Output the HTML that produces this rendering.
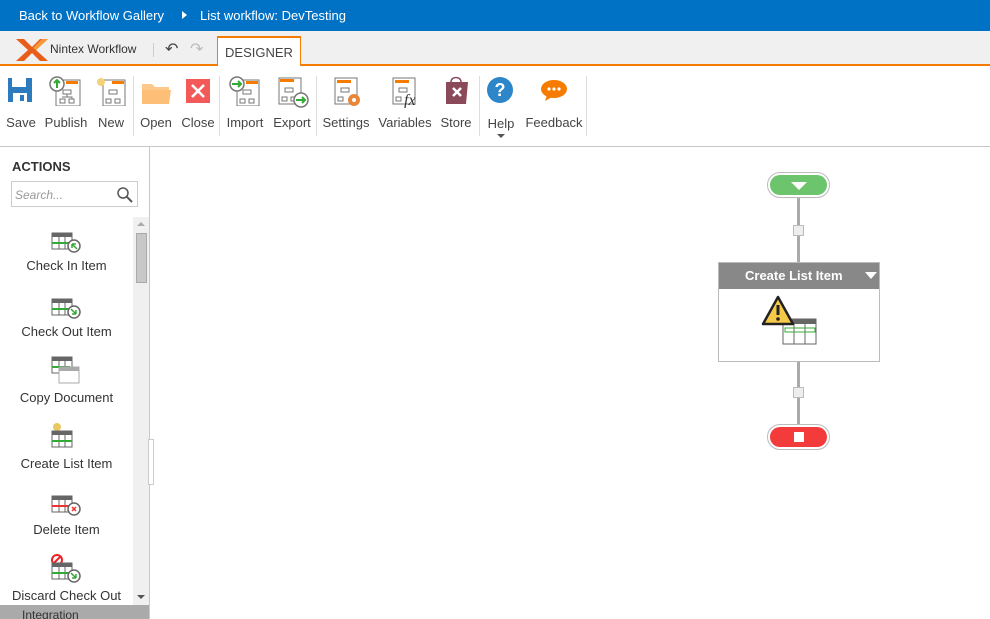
<!DOCTYPE html>
<html><head><meta charset="utf-8"><style>
*{margin:0;padding:0;box-sizing:border-box}
body{width:990px;height:619px;overflow:hidden;background:#fff;font-family:"Liberation Sans",sans-serif;position:relative;color:#333}
.abs{position:absolute}
#top{left:0;top:0;width:990px;height:31px;background:#0072c6;color:#fff;font-size:13px}
#tabs{left:0;top:31px;width:990px;height:35px;background:#f0f0f0;border-bottom:2px solid #f57c00}
#tb{left:0;top:66px;width:990px;height:81px;border-bottom:1px solid #c8c8c8}
.btn{position:absolute;top:0;font-size:13px;color:#444;text-align:center}
.btn span{position:absolute;top:49px;left:50%;transform:translateX(-50%);white-space:nowrap}
.sep{position:absolute;top:10px;width:1px;height:60px;background:#ddd}
.act{position:absolute;left:0;width:133px;text-align:center;font-size:13px;color:#333}
</style></head><body>
<div id="top" class="abs">
 <div class="abs" style="left:19px;top:8px">Back to Workflow Gallery</div>
 <div class="abs" style="left:182px;top:11px;width:0;height:0;border-left:5px solid #fff;border-top:4px solid transparent;border-bottom:4px solid transparent"></div>
 <div class="abs" style="left:200px;top:8px">List workflow: DevTesting</div>
</div>
<div id="tabs" class="abs">
 <svg class="abs" style="left:14px;top:6px" width="36" height="26"><path d="M2 2 L14 13 L2 24 L10 24 L18 16 L26 24 L34 24 L22 13 L34 2 L26 2 L18 10 L10 2Z" fill="#e85d1a"/><path d="M22 13 L34 2 L28 2 L19 11Z" fill="#f59a3a"/></svg>
 <div class="abs" style="left:50px;top:11px;font-size:12px;color:#333">Nintex Workflow</div>
 <div class="abs" style="left:153px;top:12px;width:1px;height:14px;background:#ccc"></div>
 <div class="abs" style="left:165px;top:8px;font-size:16px;color:#444">↶</div>
 <div class="abs" style="left:190px;top:8px;font-size:16px;color:#bbb">↷</div>
 <div class="abs" style="left:217px;top:5px;width:84px;height:30px;background:#fff;border:1px solid #f57c00;border-top:2px solid #f57c00;border-bottom:none;font-size:13px;color:#444;text-align:center;line-height:30px">DESIGNER</div>
</div>
<div id="tb" class="abs">
 <div class="btn" style="left:3px;width:36px"><svg class="abs" style="left:5px;top:12px" width="26" height="26"><rect width="24" height="24" fill="#2c7bbf"/><rect x="4" y="0" width="14" height="9" fill="#fff"/><rect x="5" y="15" width="14" height="9" fill="#fff"/><rect x="12" y="17" width="4" height="6" fill="#2c7bbf"/></svg><span>Save</span></div>
 <div class="btn" style="left:44px;width:44px"><svg class="abs" style="left:5px;top:10px" width="34" height="30"><rect x="7" y="4" width="24" height="26" fill="#fff" stroke="#777"/><rect x="17" y="5" width="12" height="3" fill="#f57c00"/><path d="M14 14h8v4h-8zM11 23h5v4h-5zM20 23h5v4h-5zM18 18v3M13 21h10v2" fill="none" stroke="#777"/><circle cx="8" cy="8" r="7" fill="#fff" stroke="#777" stroke-width="1.5"/><path d="M8 12V4M5 7l3-3 3 3" stroke="#3a3" stroke-width="2" fill="none"/></svg><span>Publish</span></div>
 <div class="btn" style="left:93px;width:36px"><svg class="abs" style="left:2px;top:10px" width="34" height="30"><rect x="8" y="4" width="22" height="26" fill="#fff" stroke="#777"/><rect x="17" y="5" width="12" height="3" fill="#f57c00"/><path d="M14 14h8v4h-8zM11 23h5v4h-5zM20 23h5v4h-5z" fill="none" stroke="#777"/><circle cx="6" cy="6" r="4" fill="#f3d27a"/></svg><span>New</span></div>
 <div class="sep" style="left:133px"></div>
 <div class="btn" style="left:138px;width:36px"><svg class="abs" style="left:3px;top:14px" width="32" height="26"><path d="M1 4h10l3 3h14v17H1z" fill="#fcc98a"/><path d="M1 10h29l-2 14H1z" fill="#fdbf78"/></svg><span>Open</span></div>
 <div class="btn" style="left:180px;width:36px"><svg class="abs" style="left:6px;top:13px" width="25" height="25"><rect width="24" height="24" fill="#f25a5a"/><path d="M6 6l12 12M18 6L6 18" stroke="#fff" stroke-width="2.5"/></svg><span>Close</span></div>
 <div class="sep" style="left:219px"></div>
 <div class="btn" style="left:224px;width:42px"><svg class="abs" style="left:5px;top:10px" width="34" height="30"><rect x="8" y="4" width="22" height="26" fill="#fff" stroke="#777"/><rect x="17" y="5" width="12" height="3" fill="#f57c00"/><path d="M14 14h8v4h-8zM11 23h5v4h-5zM20 23h5v4h-5z" fill="none" stroke="#777"/><circle cx="8" cy="8" r="7" fill="#fff" stroke="#777" stroke-width="1.5"/><path d="M3 8h9M9 5l3 3-3 3" stroke="#3a3" stroke-width="2" fill="none"/></svg><span>Import</span></div>
 <div class="btn" style="left:271px;width:42px"><svg class="abs" style="left:5px;top:10px" width="34" height="32"><rect x="3" y="2" width="22" height="26" fill="#fff" stroke="#777"/><rect x="4" y="3" width="14" height="3" fill="#f57c00"/><path d="M9 12h8v4H9zM6 21h5v4H6zM15 21h5v4h-5z" fill="none" stroke="#777"/><circle cx="25" cy="24" r="7" fill="#fff" stroke="#777" stroke-width="1.5"/><path d="M20 24h9M26 21l3 3-3 3" stroke="#3a3" stroke-width="2" fill="none"/></svg><span>Export</span></div>
 <div class="sep" style="left:316px"></div>
 <div class="btn" style="left:321px;width:50px"><svg class="abs" style="left:12px;top:10px" width="32" height="32"><rect x="2" y="2" width="22" height="26" fill="#fff" stroke="#777"/><rect x="4" y="4" width="14" height="3" fill="#f57c00"/><path d="M8 12h8v4H8zM5 21h5v4H5z" fill="none" stroke="#777"/><circle cx="21" cy="24" r="6" fill="#e8873a"/><circle cx="21" cy="24" r="2" fill="#fff"/></svg><span>Settings</span></div>
 <div class="btn" style="left:377px;width:56px"><svg class="abs" style="left:14px;top:10px" width="32" height="32"><rect x="2" y="2" width="22" height="26" fill="#fff" stroke="#777"/><rect x="4" y="4" width="14" height="3" fill="#f57c00"/><path d="M8 12h8v4H8zM5 21h5v4H5z" fill="none" stroke="#777"/><text x="13" y="29" font-family="Liberation Serif" font-style="italic" font-size="16" fill="#333">fx</text></svg><span>Variables</span></div>
 <div class="btn" style="left:438px;width:36px"><svg class="abs" style="left:4px;top:8px" width="30" height="32"><path d="M9 8c0-6 10-6 10 0" fill="none" stroke="#8b4a5a" stroke-width="1.5"/><path d="M4 8h22l-2 22H4z" fill="#8b4a5a"/><path d="M11 14l8 8M19 14l-8 8" stroke="#fff" stroke-width="2.5"/></svg><span>Store</span></div>
 <div class="sep" style="left:479px"></div>
 <div class="btn" style="left:484px;width:34px"><svg class="abs" style="left:3px;top:11px" width="28" height="28"><circle cx="13" cy="13" r="13" fill="#2c86c8"/><text x="13" y="19" text-anchor="middle" font-size="18" font-weight="bold" fill="#fff" font-family="Liberation Sans">?</text></svg><span style="top:50px">Help</span><div class="abs" style="left:13px;top:68px;border-top:4px solid #555;border-left:4px solid transparent;border-right:4px solid transparent"></div></div>
 <div class="btn" style="left:525px;width:58px"><svg class="abs" style="left:15px;top:13px" width="28" height="24"><ellipse cx="14" cy="10" rx="13" ry="9" fill="#f57c00"/><path d="M7 16l-2 6 7-4z" fill="#f57c00"/><circle cx="9" cy="10" r="1.6" fill="#fff"/><circle cx="14" cy="10" r="1.6" fill="#fff"/><circle cx="19" cy="10" r="1.6" fill="#fff"/></svg><span>Feedback</span></div>
 <div class="sep" style="left:586px"></div>
</div>
<!-- left panel -->
<div class="abs" style="left:0;top:147px;width:150px;height:472px;border-right:1px solid #c8c8c8">
 <div class="abs" style="left:12px;top:12px;font-size:13px;font-weight:bold;color:#333">ACTIONS</div>
 <div class="abs" style="left:11px;top:34px;width:127px;height:26px;border:1px solid #ccc"><div class="abs" style="left:3px;top:6px;font-size:12px;font-style:italic;color:#999">Search...</div><svg class="abs" style="left:104px;top:4px" width="17" height="17"><circle cx="7" cy="7" r="5" fill="none" stroke="#555" stroke-width="1.5"/><path d="M11 11l5 5" stroke="#555" stroke-width="2"/></svg></div>
 <div class="abs" style="left:133px;top:70px;width:16px;height:388px;background:#f0f0f0"><div class="abs" style="left:3px;top:16px;width:11px;height:50px;background:#c8c8c8;border:1px solid #aaa"></div><div class="abs" style="left:4px;top:5px;border-bottom:4px solid #aaa;border-left:4px solid transparent;border-right:4px solid transparent"></div><div class="abs" style="left:4px;top:378px;border-top:4px solid #555;border-left:4px solid transparent;border-right:4px solid transparent"></div></div>
 <div class="act" style="top:111px">Check In Item</div>
 <div class="act" style="top:177px">Check Out Item</div>
 <div class="act" style="top:243px">Copy Document</div>
 <div class="act" style="top:309px">Create List Item</div>
 <div class="act" style="top:375px">Delete Item</div>
 <div class="act" style="top:441px">Discard Check Out</div>
 <div class="abs" style="left:0;top:458px;width:149px;height:14px;background:#aaa;font-size:12px;color:#333;padding-left:22px;line-height:20px;overflow:hidden">Integration</div>
 <svg class="abs" style="left:50px;top:84px" width="34" height="24"><rect x="2" y="2" width="20" height="16" fill="#fff" stroke="#666"/><rect x="2" y="2" width="20" height="4" fill="#666"/><path d="M9 6v12M15 6v12" stroke="#666"/><path d="M2 12h18" stroke="#3a3" stroke-width="2"/><circle cx="24" cy="15" r="6" fill="#fff" stroke="#666" stroke-width="1.5"/><path d="M27 18l-5-5M22 13v4M22 13h4" stroke="#3a3" stroke-width="1.5"/></svg>
 <svg class="abs" style="left:50px;top:150px" width="34" height="24"><rect x="2" y="2" width="20" height="16" fill="#fff" stroke="#666"/><rect x="2" y="2" width="20" height="4" fill="#666"/><path d="M9 6v12M15 6v12" stroke="#666"/><path d="M2 12h18" stroke="#3a3" stroke-width="2"/><circle cx="24" cy="15" r="6" fill="#fff" stroke="#666" stroke-width="1.5"/><path d="M21 12l5 5M26 13v4M22 17h4" stroke="#3a3" stroke-width="1.5"/></svg>
 <svg class="abs" style="left:50px;top:208px" width="34" height="32"><rect x="2" y="2" width="20" height="16" fill="#fff" stroke="#666"/><rect x="2" y="2" width="20" height="4" fill="#666"/><path d="M9 6v12M15 6v12" stroke="#666"/><path d="M2 12h18" stroke="#3a3" stroke-width="2"/><rect x="9" y="12" width="20" height="16" fill="#fff" stroke="#aaa"/><rect x="9" y="12" width="20" height="4" fill="#aaa"/></svg>
 <svg class="abs" style="left:50px;top:275px" width="34" height="30"><circle cx="7" cy="5" r="4" fill="#e8c860"/><rect x="2" y="9" width="20" height="16" fill="#fff" stroke="#666"/><rect x="2" y="9" width="20" height="4" fill="#666"/><path d="M9 13v12M15 13v12" stroke="#666"/><path d="M2 19h20" stroke="#3a3" stroke-width="2"/></svg>
 <svg class="abs" style="left:50px;top:347px" width="34" height="24"><rect x="2" y="2" width="20" height="16" fill="#fff" stroke="#666"/><rect x="2" y="2" width="20" height="4" fill="#666"/><path d="M9 6v12M15 6v12" stroke="#666"/><path d="M2 12h18" stroke="#e33" stroke-width="2"/><circle cx="24" cy="15" r="6" fill="#fff" stroke="#666" stroke-width="1.5"/><path d="M22 13l4 4M26 13l-4 4" stroke="#e33" stroke-width="1.5"/></svg>
 <svg class="abs" style="left:50px;top:406px" width="34" height="32"><circle cx="7" cy="7" r="5" fill="#fff" stroke="#e22" stroke-width="2"/><path d="M4 10l6-6" stroke="#e22" stroke-width="2"/><rect x="2" y="10" width="20" height="16" fill="#fff" stroke="#666"/><rect x="2" y="10" width="20" height="4" fill="#666"/><path d="M9 14v12M15 14v12" stroke="#666"/><path d="M2 20h18" stroke="#3a3" stroke-width="2"/><circle cx="24" cy="23" r="6" fill="#fff" stroke="#666" stroke-width="1.5"/><path d="M21 20l5 5M26 21v4M22 25h4" stroke="#3a3" stroke-width="1.5"/></svg>
 <div class="abs" style="left:148px;top:292px;width:6px;height:46px;border:1px solid #ccc;background:#fff"></div>
</div>
<!-- canvas -->
<div class="abs" style="left:797px;top:197px;width:3px;height:228px;background:#aaa"></div>
<div class="abs" style="left:767px;top:172px;width:63px;height:26px;border-radius:13px;border:1px solid #bbb;background:#fff"><div class="abs" style="left:2px;top:2px;width:57px;height:20px;border-radius:10px;background:#6cc46c"></div><div class="abs" style="left:23px;top:9px;border-top:8px solid #fff;border-left:8px solid transparent;border-right:8px solid transparent"></div></div>
<div class="abs" style="left:793px;top:225px;width:11px;height:11px;background:#eee;border:1px solid #bbb"></div>
<div class="abs" style="left:718px;top:262px;width:162px;height:100px;border:1px solid #bbb;background:#fff"><div style="height:26px;background:#888;color:#fff;font-size:13px;font-weight:bold;line-height:26px;padding-left:26px">Create List Item</div><div class="abs" style="left:146px;top:9px;border-top:7px solid #fff;border-left:6px solid transparent;border-right:6px solid transparent"></div>
 <svg class="abs" style="left:42px;top:32px" width="60" height="52"><rect x="22" y="24" width="33" height="25" fill="#fff" stroke="#666"/><rect x="22" y="24" width="33" height="5" fill="#666"/><path d="M33 29v20M44 29v20" stroke="#666"/><rect x="24" y="33" width="30" height="4" fill="none" stroke="#3a3"/><path d="M17 2L2 29h30z" fill="#f7c948" stroke="#222" stroke-width="2.5" stroke-linejoin="round"/><path d="M17 10v10" stroke="#222" stroke-width="3"/><circle cx="17" cy="24" r="1.8" fill="#222"/></svg>
</div>
<div class="abs" style="left:793px;top:387px;width:11px;height:11px;background:#eee;border:1px solid #bbb"></div>
<div class="abs" style="left:767px;top:424px;width:63px;height:26px;border-radius:13px;border:1px solid #bbb;background:#fff"><div class="abs" style="left:2px;top:2px;width:57px;height:20px;border-radius:10px;background:#f33b3b"></div><div class="abs" style="left:26px;top:7px;width:10px;height:10px;background:#fff"></div></div>
</body></html>
